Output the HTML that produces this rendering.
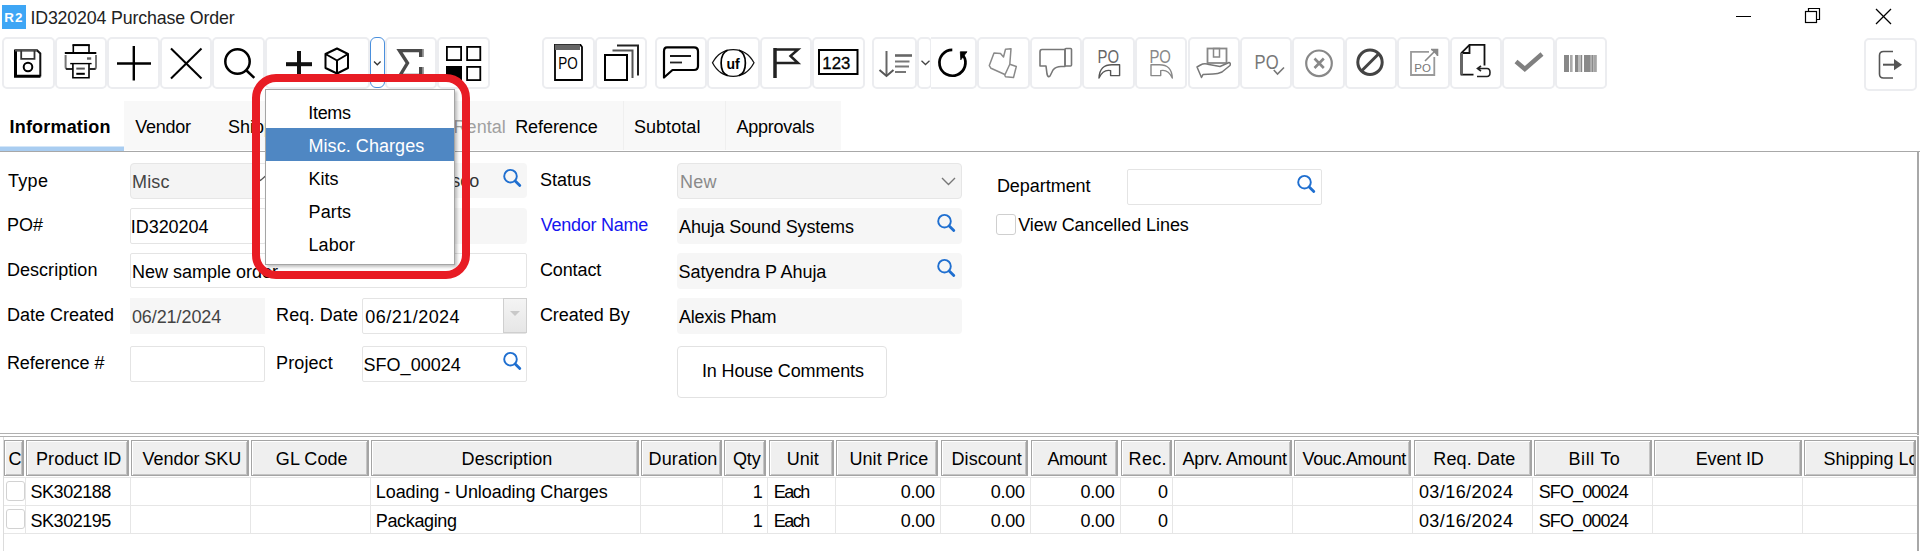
<!DOCTYPE html>
<html><head><meta charset="utf-8"><style>
html,body{margin:0;padding:0;background:#fff;width:1920px;height:551px;overflow:hidden;position:relative;font-family:"Liberation Sans",sans-serif;}
.a{position:absolute;box-sizing:border-box;}
.t{position:absolute;line-height:1;white-space:nowrap;}
svg.a{overflow:visible;}
</style></head><body>

<div class="a" style="left:2px;top:5px;width:24px;height:24px;background:#3ea6f5;"></div>
<div class="t" style="left:2px;top:11px;width:24px;text-align:center;font-size:13.4px;font-weight:700;color:#fff;letter-spacing:1.1px;">R2</div>
<div class="t" style="left:30.40px;top:9.73px;font-size:17.8px;color:#222;font-weight:400;letter-spacing:-0.148px;">ID320204 Purchase Order</div>
<svg class="a" style="left:1730px;top:5px" width="190" height="25" viewBox="0 0 190 25"><line x1="6" y1="11.5" x2="21" y2="11.5" stroke="#000" stroke-width="1"/><rect x="75.5" y="6.5" width="11" height="11" fill="none" stroke="#000" stroke-width="1.2"/><path d="M78.5 6.5 V3.5 H89.5 V14.5 H86.5" fill="none" stroke="#000" stroke-width="1.2"/><line x1="146" y1="4" x2="161" y2="19" stroke="#000" stroke-width="1.2"/><line x1="161" y1="4" x2="146" y2="19" stroke="#000" stroke-width="1.2"/></svg>
<div class="a" style="left:2px;top:37px;width:53px;height:52px;border:2px solid #ecedf0;border-radius:5px;background:#fff;"></div>
<div class="a" style="left:55px;top:37px;width:52px;height:52px;border:2px solid #ecedf0;border-radius:5px;background:#fff;"></div>
<div class="a" style="left:107px;top:37px;width:53px;height:52px;border:2px solid #ecedf0;border-radius:5px;background:#fff;"></div>
<div class="a" style="left:160px;top:37px;width:52px;height:52px;border:2px solid #ecedf0;border-radius:5px;background:#fff;"></div>
<div class="a" style="left:212px;top:37px;width:53px;height:52px;border:2px solid #ecedf0;border-radius:5px;background:#fff;"></div>
<div class="a" style="left:265px;top:37px;width:105px;height:52px;border:2px solid #ecedf0;border-radius:5px;background:#fff;"></div>
<div class="a" style="left:385px;top:37px;width:52px;height:52px;border:2px solid #ecedf0;border-radius:5px;background:#fff;"></div>
<div class="a" style="left:437px;top:37px;width:53px;height:52px;border:2px solid #ecedf0;border-radius:5px;background:#fff;"></div>
<div class="a" style="left:542px;top:37px;width:53px;height:52px;border:2px solid #ecedf0;border-radius:5px;background:#fff;"></div>
<div class="a" style="left:595px;top:37px;width:52px;height:52px;border:2px solid #ecedf0;border-radius:5px;background:#fff;"></div>
<div class="a" style="left:655px;top:37px;width:52px;height:52px;border:2px solid #ecedf0;border-radius:5px;background:#fff;"></div>
<div class="a" style="left:707px;top:37px;width:53px;height:52px;border:2px solid #ecedf0;border-radius:5px;background:#fff;"></div>
<div class="a" style="left:760px;top:37px;width:52px;height:52px;border:2px solid #ecedf0;border-radius:5px;background:#fff;"></div>
<div class="a" style="left:812px;top:37px;width:53px;height:52px;border:2px solid #ecedf0;border-radius:5px;background:#fff;"></div>
<div class="a" style="left:872px;top:37px;width:45px;height:52px;border:2px solid #ecedf0;border-radius:5px;background:#fff;"></div>
<div class="a" style="left:1030px;top:37px;width:52px;height:52px;border:2px solid #ecedf0;border-radius:5px;background:#fff;"></div>
<div class="a" style="left:977px;top:37px;width:53px;height:52px;border:2px solid #ecedf0;border-radius:5px;background:#fff;"></div>
<div class="a" style="left:1082px;top:37px;width:53px;height:52px;border:2px solid #ecedf0;border-radius:5px;background:#fff;"></div>
<div class="a" style="left:1135px;top:37px;width:52px;height:52px;border:2px solid #ecedf0;border-radius:5px;background:#fff;"></div>
<div class="a" style="left:1188px;top:37px;width:52px;height:52px;border:2px solid #ecedf0;border-radius:5px;background:#fff;"></div>
<div class="a" style="left:1240px;top:37px;width:52px;height:52px;border:2px solid #ecedf0;border-radius:5px;background:#fff;"></div>
<div class="a" style="left:1292px;top:37px;width:53px;height:52px;border:2px solid #ecedf0;border-radius:5px;background:#fff;"></div>
<div class="a" style="left:1345px;top:37px;width:52px;height:52px;border:2px solid #ecedf0;border-radius:5px;background:#fff;"></div>
<div class="a" style="left:1397px;top:37px;width:53px;height:52px;border:2px solid #ecedf0;border-radius:5px;background:#fff;"></div>
<div class="a" style="left:1450px;top:37px;width:52px;height:52px;border:2px solid #ecedf0;border-radius:5px;background:#fff;"></div>
<div class="a" style="left:1502px;top:37px;width:53px;height:52px;border:2px solid #ecedf0;border-radius:5px;background:#fff;"></div>
<div class="a" style="left:1555px;top:37px;width:52px;height:52px;border:2px solid #ecedf0;border-radius:5px;background:#fff;"></div>
<div class="a" style="left:917px;top:37px;width:15px;height:52px;border:2px solid #ecedf0;border-radius:5px;background:#fff;"></div>
<div class="a" style="left:931px;top:37px;width:46px;height:52px;border:2px solid #ecedf0;border-left:none;border-radius:0 5px 5px 0;background:#fff;"></div>
<div class="a" style="left:1864px;top:38px;width:53px;height:53px;border:2px solid #ecedf0;border-radius:5px;background:#fff;"></div>
<div class="a" style="left:370px;top:37px;width:15px;height:51px;border:1.5px solid #4a8fdc;border-radius:6px;background:#fff;"></div>
<svg class="a" style="left:0px;top:0px" width="1" height="1" viewBox="0 0 1 1"></svg>
<svg class="a" style="left:0;top:0" width="1920" height="551" viewBox="0 0 1920 551"><path d="M15.5 50.2 H37 L40.3 53.5 V76.5" fill="none" stroke="#111" stroke-width="2"/><path d="M15.5 49.5 V76.3 H40.5" fill="none" stroke="#000" stroke-width="3"/><path d="M15 50.3 H37" fill="none" stroke="#555" stroke-width="2.4"/><path d="M21.2 50.5 V58.8 H34.5 V50.5" fill="none" stroke="#333" stroke-width="1.8"/><circle cx="28" cy="67" r="4.3" fill="none" stroke="#000" stroke-width="2"/><path d="M73.3 52.5 V45 H89 V52.5" fill="none" stroke="#000" stroke-width="1.6"/><path d="M72.6 45.2 H89.6" stroke="#000" stroke-width="1.8"/><path d="M65.6 55 V67 Q65.6 69 67.6 69 H72.5 M89.7 69 H94 Q96 69 96 67 V55" fill="none" stroke="#777" stroke-width="2"/><path d="M66 69 H72.5 M89.7 69 H95.5" stroke="#111" stroke-width="1.4"/><path d="M64.8 53 H96.3" stroke="#000" stroke-width="1.8"/><path d="M70.2 63.6 H91.6" stroke="#000" stroke-width="1.4"/><path d="M72.9 63.8 V77.8 H89 V63.8" fill="none" stroke="#000" stroke-width="1.6"/><rect x="76.3" y="67.6" width="8.5" height="2" fill="#555"/><rect x="76.3" y="72.8" width="8.5" height="2" fill="#000"/><rect x="87" y="57.3" width="4.2" height="2.4" fill="#666"/><line x1="133.8" y1="46" x2="133.8" y2="80.5" stroke="#000" stroke-width="2.4"/><line x1="117" y1="63.5" x2="151" y2="63.5" stroke="#000" stroke-width="2.4"/><line x1="171" y1="48.5" x2="201.5" y2="78.5" stroke="#000" stroke-width="2"/><line x1="201.5" y1="48.5" x2="171" y2="78.5" stroke="#000" stroke-width="2"/><circle cx="237.5" cy="61.5" r="12.2" fill="none" stroke="#000" stroke-width="2.5"/><line x1="246.5" y1="70.5" x2="254.3" y2="77.8" stroke="#000" stroke-width="2.5"/><line x1="299" y1="51" x2="299" y2="78" stroke="#111" stroke-width="4"/><line x1="286" y1="64.2" x2="312" y2="64.2" stroke="#111" stroke-width="4"/><path d="M337 48.5 L348 54 V68 L337 73.5 L325.5 68 V54 Z M325.5 54 L337 60.5 L348 54 M337 60.5 V73.5" fill="none" stroke="#000" stroke-width="2" stroke-linejoin="round"/><path d="M374 61.5 L377.3 64.8 L380.6 61.5" fill="none" stroke="#333" stroke-width="1.3"/><path d="M420.7 57 V50.6 H399.5 L407.5 63 L400 75.5 H420.7 V67" fill="none" stroke="#4a4a4a" stroke-width="3.4" stroke-linejoin="miter"/><path d="M423 49 V57 M423 67 V76" stroke="#777" stroke-width="1.4"/><rect x="446.9" y="46.9" width="14.2" height="13.2" fill="none" stroke="#000" stroke-width="1.8"/><rect x="467.1" y="46.9" width="13.2" height="13.2" fill="none" stroke="#000" stroke-width="1.8"/><rect x="446" y="66" width="16" height="15.5" fill="#000"/><rect x="467.1" y="66.9" width="13.2" height="13.2" fill="none" stroke="#000" stroke-width="1.8"/><path d="M555 45 H580.5 L582 47 V80 H555 Z" fill="none" stroke="#000" stroke-width="1.8"/><rect x="555" y="44.5" width="25" height="5.5" fill="#666"/><text x="558.3" y="68.6" font-family="Liberation Sans" font-size="16.5" textLength="19.5" lengthAdjust="spacingAndGlyphs" fill="#000">PO</text><rect x="605" y="55" width="22" height="25" fill="none" stroke="#000" stroke-width="2"/><path d="M612.5 50.5 H632.5 V78" fill="none" stroke="#555" stroke-width="2"/><path d="M617 45.5 H638 V75.5" fill="none" stroke="#222" stroke-width="2"/><path d="M667 47.3 H694 Q698 47.3 698 51.3 V66 Q698 70 694 70 H672.5 L664 77.5 V51.3 Q664 47.3 667 47.3 Z" fill="none" stroke="#000" stroke-width="2.2" stroke-linejoin="round"/><line x1="670" y1="56" x2="691" y2="56" stroke="#000" stroke-width="1.8"/><line x1="670" y1="62.5" x2="682" y2="62.5" stroke="#222" stroke-width="1.8"/><path d="M712.5 62.8 C718 52.5 726 49.6 733.2 49.6 C740.5 49.6 748.5 52.5 754 62.8 C748.5 73.2 740.5 76.3 733.2 76.3 C726 76.3 718 73.2 712.5 62.8 Z" fill="none" stroke="#111" stroke-width="1.3"/><path d="M727.5 50.3 C719 54 719 72 727.5 75.6 M739 50.3 C747.5 54 747.5 72 739 75.6" fill="none" stroke="#000" stroke-width="1.7"/><text x="733" y="68.5" font-family="Liberation Sans" font-size="14" font-weight="700" text-anchor="middle" fill="#000">uf</text><line x1="775" y1="48" x2="775" y2="78" stroke="#222" stroke-width="3.5"/><path d="M775 49.5 H798 L790.5 56 L798 63 H775" fill="none" stroke="#222" stroke-width="2.5" stroke-linejoin="miter"/><rect x="819" y="50" width="38.5" height="24" fill="none" stroke="#000" stroke-width="2"/><text x="822.3" y="68.6" font-family="Liberation Sans" font-size="16.5" textLength="28" lengthAdjust="spacingAndGlyphs" fill="#000" stroke="#000" stroke-width="0.3">123</text><line x1="886.5" y1="51" x2="886.5" y2="75" stroke="#666" stroke-width="2"/><path d="M879.5 70 L886.5 76 L893.5 70" fill="none" stroke="#555" stroke-width="2"/><line x1="895" y1="55.5" x2="912" y2="55.5" stroke="#666" stroke-width="2.6"/><line x1="895" y1="61.5" x2="909.5" y2="61.5" stroke="#777" stroke-width="2"/><line x1="895" y1="66.5" x2="909" y2="66.5" stroke="#777" stroke-width="2"/><line x1="895" y1="72" x2="906" y2="72" stroke="#777" stroke-width="2"/><path d="M921.5 60.8 L925.5 64.5 L929.5 60.8" fill="none" stroke="#444" stroke-width="1.3"/><path d="M952.3 49.9 A13 12.9 0 1 0 963.2 55.6" fill="none" stroke="#000" stroke-width="2.7"/><path d="M960.3 51.8 H967 L960.8 59.8 Z" fill="#000" stroke="#000" stroke-width="0.8"/><path d="M994 53 L1000.5 53.6 L1003.5 57 L1005.5 49.3 L1011 48.7 L1009.8 64.2 L1016.3 66.5 L1013.5 77.6 L1005.5 76.8 L1004.3 74.2 L991 68.3 L989.3 65.6 Z M1009.8 64.2 L1004.6 75.5" fill="none" stroke="#8a8a8a" stroke-width="1.5" stroke-linejoin="round"/><path d="M1065 49.5 H1042 Q1040 49.5 1040 52 V66 H1046 L1047 74 Q1048 78 1050 76 L1053 70 Q1056 66.5 1061 66.5 H1065 Z" fill="none" stroke="#777" stroke-width="1.6" stroke-linejoin="round"/><rect x="1065" y="48.5" width="6.5" height="17.5" rx="1" fill="none" stroke="#777" stroke-width="1.6"/><text x="1097.6" y="62.5" font-family="Liberation Sans" font-size="18.5" textLength="21.5" lengthAdjust="spacingAndGlyphs" fill="#666">PO</text><path d="M1099 78 C1099.5 68 1104 64.8 1112 64.8 H1119.6 V75.6 H1110.6 V70.6 C1106 69.6 1102 71.5 1099 78 Z" fill="none" stroke="#555" stroke-width="1.4" stroke-linejoin="round"/><text x="1149.4" y="62.5" font-family="Liberation Sans" font-size="18.5" textLength="21.5" lengthAdjust="spacingAndGlyphs" fill="#888">PO</text><path d="M1172.3 78 C1171.8 68 1167.3 64.8 1159.3 64.8 H1151 V75.6 H1160.7 V70.6 C1165.3 69.6 1169.3 71.5 1172.3 78 Z" fill="none" stroke="#888" stroke-width="1.4" stroke-linejoin="round"/><rect x="1207.5" y="48.5" width="19" height="14.5" fill="none" stroke="#888" stroke-width="1.8"/><rect x="1213.5" y="48.5" width="6" height="8.5" fill="none" stroke="#888" stroke-width="1.5"/><path d="M1197 67 L1200.5 65 Q1204 63 1209 64.5 L1220 66.5 L1229 62.5 Q1231 63 1230 65.5 L1222 72 Q1218 74 1213 74 L1203 74.5 L1201.5 77.5 Z" fill="none" stroke="#777" stroke-width="1.5" stroke-linejoin="round"/><text x="1254.6" y="68.6" font-family="Liberation Sans" font-size="20" textLength="24" lengthAdjust="spacingAndGlyphs" fill="#777">PO</text><path d="M1273.8 70 L1277.5 74 L1284 67.5" fill="none" stroke="#777" stroke-width="1.6"/><circle cx="1319" cy="63.3" r="12.8" fill="none" stroke="#888" stroke-width="2.2"/><path d="M1314.5 58.5 L1323.8 68 M1323.8 58.5 L1314.5 68" fill="none" stroke="#888" stroke-width="2.6"/><circle cx="1370" cy="62.3" r="12.2" fill="none" stroke="#444" stroke-width="3"/><line x1="1361.5" y1="71" x2="1379" y2="53.5" stroke="#444" stroke-width="3"/><path d="M1429 51.8 H1411 V75 H1434.3 V57" fill="none" stroke="#999" stroke-width="1.8"/><line x1="1425" y1="61" x2="1436" y2="50" stroke="#888" stroke-width="1.6"/><path d="M1431 49.5 H1437.5 V56" fill="#888" stroke="#888" stroke-width="1.6"/><text x="1422.6" y="71.8" font-family="Liberation Sans" font-size="11.5" text-anchor="middle" fill="#777">PO</text><path d="M1484.5 65.5 V44.8 H1469.5 L1461.5 52.8 V74.6 H1473.5" fill="none" stroke="#111" stroke-width="1.8"/><path d="M1469.5 44.8 V53 H1461.5" fill="none" stroke="#111" stroke-width="1.8"/><line x1="1461.5" y1="53" x2="1461.5" y2="74.6" stroke="#666" stroke-width="3"/><path d="M1478 68.5 H1487 Q1490 68.5 1490 72.5 Q1490 76.5 1487 76.5 H1477" fill="none" stroke="#222" stroke-width="1.6"/><path d="M1481 66 L1477.5 68.5 L1481 71" fill="none" stroke="#222" stroke-width="1.6"/><path d="M1516 61.5 L1524.8 69 L1542 54" fill="none" stroke="#808080" stroke-width="4.5" stroke-linejoin="miter"/><rect x="1564" y="55" width="5" height="17" fill="#888"/><rect x="1570" y="55" width="2.6" height="17" fill="#aaa"/><rect x="1575" y="55" width="3" height="17" fill="#888"/><rect x="1578" y="55" width="3" height="17" fill="#bbb"/><rect x="1581" y="55" width="1.2" height="17" fill="#888"/><rect x="1584" y="55" width="6" height="17" fill="#8a8a8a"/><rect x="1590" y="55" width="1.5" height="17" fill="#aaa"/><rect x="1591.5" y="55" width="2" height="17" fill="#8a8a8a"/><rect x="1593.5" y="55" width="3.3" height="17" fill="#a5a5a5"/><path d="M1893 51.5 H1883.5 Q1879.5 51.5 1879.5 55.5 V74 Q1879.5 78 1883.5 78 H1893" fill="none" stroke="#555" stroke-width="1.6"/><line x1="1883" y1="64.7" x2="1896" y2="64.7" stroke="#555" stroke-width="2"/><path d="M1894 59 L1902 64.7 L1894 70.3 Z" fill="#555"/></svg>
<div class="a" style="left:124px;top:101px;width:717px;height:49px;background:#f8f8f8;"></div>
<div class="a" style="left:623px;top:101px;width:1px;height:49px;background:#efefef;"></div>
<div class="a" style="left:725px;top:101px;width:1px;height:49px;background:#efefef;"></div>
<div class="a" style="left:0px;top:146px;width:124px;height:5px;background:linear-gradient(#d4e6f8 0,#d4e6f8 20%,#a9cdf1 20%);"></div>
<div class="a" style="left:0px;top:151px;width:1920px;height:1px;background:#a8a8a8;"></div>
<div class="a" style="left:1917px;top:151px;width:2px;height:284px;background:#a8a8a8;"></div>
<div class="a" style="left:0px;top:433px;width:1919px;height:1px;background:#b0b0b0;"></div>
<div class="t" style="left:9.60px;top:118.16px;font-size:18px;color:#000;font-weight:700;letter-spacing:0.18px;">Information</div>
<div class="t" style="left:135.30px;top:118.16px;font-size:18px;color:#000;font-weight:400;letter-spacing:-0.291px;">Vendor</div>
<div class="t" style="left:227.90px;top:118.16px;font-size:18px;color:#000;font-weight:400;">Shipping</div>
<div class="t" style="left:453.60px;top:117.86px;font-size:18px;color:#a0a0a0;font-weight:400;letter-spacing:0.014px;">Rental</div>
<div class="t" style="left:515.20px;top:117.86px;font-size:18px;color:#000;font-weight:400;letter-spacing:-0.067px;">Reference</div>
<div class="t" style="left:633.90px;top:117.86px;font-size:18px;color:#000;font-weight:400;letter-spacing:0.064px;">Subtotal</div>
<div class="t" style="left:736.40px;top:117.86px;font-size:18px;color:#000;font-weight:400;letter-spacing:-0.23px;">Approvals</div>
<div class="t" style="left:8.10px;top:171.66px;font-size:18px;color:#000;font-weight:400;letter-spacing:0.262px;">Type</div>
<div class="t" style="left:7.10px;top:216.06px;font-size:18px;color:#000;font-weight:400;">PO#</div>
<div class="t" style="left:6.90px;top:261.46px;font-size:18px;color:#000;font-weight:400;letter-spacing:0.048px;">Description</div>
<div class="t" style="left:6.90px;top:305.86px;font-size:18px;color:#000;font-weight:400;">Date Created</div>
<div class="t" style="left:6.90px;top:353.96px;font-size:18px;color:#000;font-weight:400;letter-spacing:-0.045px;">Reference #</div>
<div class="a" style="left:130px;top:163px;width:138px;height:36px;background:#f4f4f4;border:1px solid #e6e6e6;border-radius:4px;"></div>
<div class="t" style="left:132.10px;top:173.16px;font-size:18px;color:#444;font-weight:400;letter-spacing:0.136px;">Misc</div>
<div class="a" style="left:275px;top:163px;width:252px;height:35px;background:#f6f6f6;border-radius:4px;"></div>
<div class="a" style="left:258px;top:164px;width:8px;height:34px;background:#fff;"></div>
<svg class="a" style="left:255px;top:172px" width="12" height="14"><path d="M0.5 4 L5.5 8.5 L10.5 4" fill="none" stroke="#555" stroke-width="1.3"/></svg>
<div class="t" style="left:364.26px;top:172.16px;font-size:18px;color:#333;font-weight:400;">San Francisco</div>
<div class="a" style="left:130px;top:208px;width:136px;height:36px;background:#fff;border:1.5px solid #e4e4e4;border-radius:2px;"></div>
<div class="t" style="left:130.80px;top:217.56px;font-size:18px;color:#000;font-weight:400;letter-spacing:-0.051px;">ID320204</div>
<div class="a" style="left:272px;top:208px;width:255px;height:36px;background:#f6f6f6;border-radius:4px;"></div>
<div class="a" style="left:130px;top:253px;width:397px;height:35px;background:#fff;border:1.5px solid #e4e4e4;border-radius:2px;"></div>
<div class="t" style="left:131.90px;top:263.16px;font-size:18px;color:#000;font-weight:400;">New sample order</div>
<div class="a" style="left:130px;top:298px;width:135px;height:36px;background:#f6f6f6;"></div>
<div class="t" style="left:131.90px;top:307.96px;font-size:18px;color:#444;font-weight:400;letter-spacing:-0.075px;">06/21/2024</div>
<div class="a" style="left:130px;top:346px;width:135px;height:36px;background:#fff;border:1.5px solid #e4e4e4;border-radius:2px;"></div>
<div class="t" style="left:276.10px;top:305.86px;font-size:18px;color:#000;font-weight:400;letter-spacing:0.121px;">Req. Date</div>
<div class="a" style="left:362px;top:298px;width:165px;height:36px;background:#fff;border:1.5px solid #e4e4e4;border-radius:2px;"></div>
<div class="a" style="left:503px;top:298px;width:24px;height:35px;background:linear-gradient(#f4f4f4,#e6e6e6);border:1px solid #cfcfcf;"></div>
<svg class="a" style="left:503px;top:298px" width="24" height="35"><path d="M7 13 L12 18 L17 13 Z" fill="#c8c8c8"/></svg>
<div class="t" style="left:365.30px;top:308.06px;font-size:18px;color:#000;font-weight:400;letter-spacing:0.469px;">06/21/2024</div>
<div class="t" style="left:276.10px;top:353.56px;font-size:18px;color:#000;font-weight:400;letter-spacing:0.097px;">Project</div>
<div class="a" style="left:362px;top:346px;width:165px;height:36px;background:#fff;border:1.5px solid #e4e4e4;border-radius:2px;"></div>
<div class="t" style="left:363.60px;top:356.26px;font-size:18px;color:#000;font-weight:400;letter-spacing:0.006px;">SFO_00024</div>
<svg class="a" style="left:501.5px;top:169px" width="20" height="19" viewBox="0 0 20 19"><circle cx="8.5" cy="7.2" r="6.3" fill="none" stroke="#1f6fd0" stroke-width="1.9"/><line x1="13.2" y1="11.9" x2="17.8" y2="16.6" stroke="#1f6fd0" stroke-width="2.8" stroke-linecap="round"/></svg>
<svg class="a" style="left:501.5px;top:351.5px" width="20" height="19" viewBox="0 0 20 19"><circle cx="8.5" cy="7.2" r="6.3" fill="none" stroke="#1f6fd0" stroke-width="1.9"/><line x1="13.2" y1="11.9" x2="17.8" y2="16.6" stroke="#1f6fd0" stroke-width="2.8" stroke-linecap="round"/></svg>
<div class="t" style="left:540.00px;top:171.06px;font-size:18px;color:#000;font-weight:400;letter-spacing:0.014px;">Status</div>
<div class="t" style="left:540.80px;top:216.16px;font-size:18px;color:#1515f0;font-weight:400;letter-spacing:-0.255px;">Vendor Name</div>
<div class="t" style="left:539.90px;top:261.26px;font-size:18px;color:#000;font-weight:400;letter-spacing:-0.105px;">Contact</div>
<div class="t" style="left:539.90px;top:306.26px;font-size:18px;color:#000;font-weight:400;letter-spacing:-0.027px;">Created By</div>
<div class="a" style="left:677px;top:163px;width:285px;height:36px;background:#f4f4f4;border:1px solid #e6e6e6;border-radius:4px;"></div>
<div class="t" style="left:679.90px;top:173.06px;font-size:18px;color:#8a8a8a;font-weight:400;letter-spacing:0.295px;">New</div>
<svg class="a" style="left:940px;top:175px" width="18" height="12"><path d="M2 3 L8.5 9.5 L15 3" fill="none" stroke="#777" stroke-width="1.4"/></svg>
<div class="a" style="left:677px;top:208px;width:285px;height:36px;background:#f6f6f6;border-radius:4px;"></div>
<div class="t" style="left:679.10px;top:217.76px;font-size:18px;color:#000;font-weight:400;letter-spacing:-0.128px;">Ahuja Sound Systems</div>
<svg class="a" style="left:936px;top:214px" width="20" height="19" viewBox="0 0 20 19"><circle cx="8.5" cy="7.2" r="6.3" fill="none" stroke="#1f6fd0" stroke-width="1.9"/><line x1="13.2" y1="11.9" x2="17.8" y2="16.6" stroke="#1f6fd0" stroke-width="2.8" stroke-linecap="round"/></svg>
<div class="a" style="left:677px;top:253px;width:285px;height:36px;background:#f6f6f6;border-radius:4px;"></div>
<div class="t" style="left:678.50px;top:262.66px;font-size:18px;color:#000;font-weight:400;letter-spacing:-0.056px;">Satyendra P Ahuja</div>
<svg class="a" style="left:936px;top:259px" width="20" height="19" viewBox="0 0 20 19"><circle cx="8.5" cy="7.2" r="6.3" fill="none" stroke="#1f6fd0" stroke-width="1.9"/><line x1="13.2" y1="11.9" x2="17.8" y2="16.6" stroke="#1f6fd0" stroke-width="2.8" stroke-linecap="round"/></svg>
<div class="a" style="left:677px;top:298px;width:285px;height:36px;background:#f6f6f6;border-radius:4px;"></div>
<div class="t" style="left:679.10px;top:307.66px;font-size:18px;color:#000;font-weight:400;letter-spacing:-0.274px;">Alexis Pham</div>
<div class="a" style="left:677px;top:346px;width:210px;height:52px;background:#fff;border:1.5px solid #e2e2e2;border-radius:4px;"></div>
<div class="t" style="left:701.90px;top:362.16px;font-size:18px;color:#000;font-weight:400;letter-spacing:-0.123px;">In House Comments</div>
<div class="t" style="left:996.90px;top:176.86px;font-size:18px;color:#000;font-weight:400;letter-spacing:-0.038px;">Department</div>
<div class="a" style="left:1127px;top:169px;width:195px;height:36px;background:#fff;border:1.5px solid #e4e4e4;border-radius:2px;"></div>
<svg class="a" style="left:1296px;top:175px" width="20" height="19" viewBox="0 0 20 19"><circle cx="8.5" cy="7.2" r="6.3" fill="none" stroke="#1f6fd0" stroke-width="1.9"/><line x1="13.2" y1="11.9" x2="17.8" y2="16.6" stroke="#1f6fd0" stroke-width="2.8" stroke-linecap="round"/></svg>
<div class="a" style="left:996px;top:214px;width:20px;height:21px;background:#fff;border:1.5px solid #cfcfcf;border-radius:3px;"></div>
<div class="t" style="left:1018.25px;top:215.76px;font-size:18px;color:#000;font-weight:400;letter-spacing:-0.062px;">View Cancelled Lines</div>
<div class="a" style="left:0px;top:436px;width:1919px;height:1px;background:#b0b0b0;"></div>
<div class="a" style="left:3px;top:437px;width:1px;height:114px;background:#dcdcdc;"></div>
<div class="a" style="left:1917px;top:437px;width:2px;height:114px;background:#a8a8a8;"></div>
<div class="a" style="left:4px;top:440px;width:20px;height:36px;background:#efefef;border:1px solid #a4a4a4;border-right:2px solid #a4a4a4;box-shadow:inset 1px 1px 0 #fff, inset -1px -1px 0 #c4c4c4;"></div>
<div class="t" style="left:8.60px;top:450.26px;font-size:18px;color:#000;font-weight:400;">C</div>
<div class="a" style="left:26px;top:440px;width:103px;height:36px;background:#efefef;border:1px solid #a4a4a4;border-right:2px solid #a4a4a4;box-shadow:inset 1px 1px 0 #fff, inset -1px -1px 0 #c4c4c4;"></div>
<div class="t" style="left:36.10px;top:450.26px;font-size:18px;color:#000;font-weight:400;letter-spacing:0.018px;">Product ID</div>
<div class="a" style="left:131px;top:440px;width:118px;height:36px;background:#efefef;border:1px solid #a4a4a4;border-right:2px solid #a4a4a4;box-shadow:inset 1px 1px 0 #fff, inset -1px -1px 0 #c4c4c4;"></div>
<div class="t" style="left:142.50px;top:450.26px;font-size:18px;color:#000;font-weight:400;letter-spacing:-0.029px;">Vendor SKU</div>
<div class="a" style="left:251px;top:440px;width:118px;height:36px;background:#efefef;border:1px solid #a4a4a4;border-right:2px solid #a4a4a4;box-shadow:inset 1px 1px 0 #fff, inset -1px -1px 0 #c4c4c4;"></div>
<div class="t" style="left:275.85px;top:450.26px;font-size:18px;color:#000;font-weight:400;letter-spacing:0.053px;">GL Code</div>
<div class="a" style="left:371px;top:440px;width:268px;height:36px;background:#efefef;border:1px solid #a4a4a4;border-right:2px solid #a4a4a4;box-shadow:inset 1px 1px 0 #fff, inset -1px -1px 0 #c4c4c4;"></div>
<div class="t" style="left:461.60px;top:450.26px;font-size:18px;color:#000;font-weight:400;letter-spacing:0.073px;">Description</div>
<div class="a" style="left:641px;top:440px;width:81px;height:36px;background:#efefef;border:1px solid #a4a4a4;border-right:2px solid #a4a4a4;box-shadow:inset 1px 1px 0 #fff, inset -1px -1px 0 #c4c4c4;"></div>
<div class="t" style="left:648.60px;top:450.26px;font-size:18px;color:#000;font-weight:400;letter-spacing:0.104px;">Duration</div>
<div class="a" style="left:724px;top:440px;width:42px;height:36px;background:#efefef;border:1px solid #a4a4a4;border-right:2px solid #a4a4a4;box-shadow:inset 1px 1px 0 #fff, inset -1px -1px 0 #c4c4c4;"></div>
<div class="t" style="left:732.95px;top:450.26px;font-size:18px;color:#000;font-weight:400;letter-spacing:-0.101px;">Qty</div>
<div class="a" style="left:769px;top:440px;width:65px;height:36px;background:#efefef;border:1px solid #a4a4a4;border-right:2px solid #a4a4a4;box-shadow:inset 1px 1px 0 #fff, inset -1px -1px 0 #c4c4c4;"></div>
<div class="t" style="left:786.70px;top:450.26px;font-size:18px;color:#000;font-weight:400;letter-spacing:0.047px;">Unit</div>
<div class="a" style="left:836px;top:440px;width:102px;height:36px;background:#efefef;border:1px solid #a4a4a4;border-right:2px solid #a4a4a4;box-shadow:inset 1px 1px 0 #fff, inset -1px -1px 0 #c4c4c4;"></div>
<div class="t" style="left:849.45px;top:450.26px;font-size:18px;color:#000;font-weight:400;letter-spacing:0.082px;">Unit Price</div>
<div class="a" style="left:941px;top:440px;width:87px;height:36px;background:#efefef;border:1px solid #a4a4a4;border-right:2px solid #a4a4a4;box-shadow:inset 1px 1px 0 #fff, inset -1px -1px 0 #c4c4c4;"></div>
<div class="t" style="left:951.60px;top:450.26px;font-size:18px;color:#000;font-weight:400;letter-spacing:0.031px;">Discount</div>
<div class="a" style="left:1031px;top:440px;width:87px;height:36px;background:#efefef;border:1px solid #a4a4a4;border-right:2px solid #a4a4a4;box-shadow:inset 1px 1px 0 #fff, inset -1px -1px 0 #c4c4c4;"></div>
<div class="t" style="left:1047.50px;top:450.26px;font-size:18px;color:#000;font-weight:400;letter-spacing:-0.486px;">Amount</div>
<div class="a" style="left:1121px;top:440px;width:51px;height:36px;background:#efefef;border:1px solid #a4a4a4;border-right:2px solid #a4a4a4;box-shadow:inset 1px 1px 0 #fff, inset -1px -1px 0 #c4c4c4;"></div>
<div class="t" style="left:1128.60px;top:450.26px;font-size:18px;color:#000;font-weight:400;letter-spacing:0.33px;">Rec.</div>
<div class="a" style="left:1174px;top:440px;width:118px;height:36px;background:#efefef;border:1px solid #a4a4a4;border-right:2px solid #a4a4a4;box-shadow:inset 1px 1px 0 #fff, inset -1px -1px 0 #c4c4c4;"></div>
<div class="t" style="left:1182.50px;top:450.26px;font-size:18px;color:#000;font-weight:400;letter-spacing:-0.192px;">Aprv. Amount</div>
<div class="a" style="left:1294px;top:440px;width:117px;height:36px;background:#efefef;border:1px solid #a4a4a4;border-right:2px solid #a4a4a4;box-shadow:inset 1px 1px 0 #fff, inset -1px -1px 0 #c4c4c4;"></div>
<div class="t" style="left:1302.50px;top:450.26px;font-size:18px;color:#000;font-weight:400;letter-spacing:-0.322px;">Vouc.Amount</div>
<div class="a" style="left:1414px;top:440px;width:118px;height:36px;background:#efefef;border:1px solid #a4a4a4;border-right:2px solid #a4a4a4;box-shadow:inset 1px 1px 0 #fff, inset -1px -1px 0 #c4c4c4;"></div>
<div class="t" style="left:1433.30px;top:450.26px;font-size:18px;color:#000;font-weight:400;letter-spacing:0.121px;">Req. Date</div>
<div class="a" style="left:1534px;top:440px;width:118px;height:36px;background:#efefef;border:1px solid #a4a4a4;border-right:2px solid #a4a4a4;box-shadow:inset 1px 1px 0 #fff, inset -1px -1px 0 #c4c4c4;"></div>
<div class="t" style="left:1568.40px;top:450.26px;font-size:18px;color:#000;font-weight:400;letter-spacing:0.616px;">Bill To</div>
<div class="a" style="left:1654px;top:440px;width:148px;height:36px;background:#efefef;border:1px solid #a4a4a4;border-right:2px solid #a4a4a4;box-shadow:inset 1px 1px 0 #fff, inset -1px -1px 0 #c4c4c4;"></div>
<div class="t" style="left:1695.70px;top:450.26px;font-size:18px;color:#000;font-weight:400;letter-spacing:-0.133px;">Event ID</div>
<div class="a" style="left:1804px;top:440px;width:112px;height:36px;background:#efefef;border:1px solid #a4a4a4;border-right:2px solid #a4a4a4;box-shadow:inset 1px 1px 0 #fff, inset -1px -1px 0 #c4c4c4;"></div>
<div class="a" style="left:1805px;top:441px;width:109px;height:34px;overflow:hidden;"><div class="t" style="left:18.40000000000009px;top:9.26px;font-size:18px;">Shipping Location</div></div>
<div class="a" style="left:4px;top:477px;width:1913px;height:1px;background:#e6e6e6;"></div>
<div class="a" style="left:4px;top:505px;width:1913px;height:1px;background:#e6e6e6;"></div>
<div class="a" style="left:4px;top:533px;width:1913px;height:1px;background:#e6e6e6;"></div>
<div class="a" style="left:25px;top:477px;width:1px;height:57px;background:#e6e6e6;"></div>
<div class="a" style="left:130px;top:477px;width:1px;height:57px;background:#e6e6e6;"></div>
<div class="a" style="left:250px;top:477px;width:1px;height:57px;background:#e6e6e6;"></div>
<div class="a" style="left:370px;top:477px;width:1px;height:57px;background:#e6e6e6;"></div>
<div class="a" style="left:640px;top:477px;width:1px;height:57px;background:#e6e6e6;"></div>
<div class="a" style="left:722px;top:477px;width:1px;height:57px;background:#e6e6e6;"></div>
<div class="a" style="left:767px;top:477px;width:1px;height:57px;background:#e6e6e6;"></div>
<div class="a" style="left:835px;top:477px;width:1px;height:57px;background:#e6e6e6;"></div>
<div class="a" style="left:940px;top:477px;width:1px;height:57px;background:#e6e6e6;"></div>
<div class="a" style="left:1030px;top:477px;width:1px;height:57px;background:#e6e6e6;"></div>
<div class="a" style="left:1120px;top:477px;width:1px;height:57px;background:#e6e6e6;"></div>
<div class="a" style="left:1172px;top:477px;width:1px;height:57px;background:#e6e6e6;"></div>
<div class="a" style="left:1292px;top:477px;width:1px;height:57px;background:#e6e6e6;"></div>
<div class="a" style="left:1412px;top:477px;width:1px;height:57px;background:#e6e6e6;"></div>
<div class="a" style="left:1532px;top:477px;width:1px;height:57px;background:#e6e6e6;"></div>
<div class="a" style="left:1652px;top:477px;width:1px;height:57px;background:#e6e6e6;"></div>
<div class="a" style="left:1802px;top:477px;width:1px;height:57px;background:#e6e6e6;"></div>
<div class="a" style="left:6px;top:481px;width:19px;height:20px;background:#fff;border:1px solid #d2d2d2;border-radius:3px;"></div>
<div class="t" style="left:30.60px;top:483.26px;font-size:18px;color:#000;font-weight:400;letter-spacing:-0.495px;">SK302188</div>
<div class="t" style="left:375.80px;top:483.26px;font-size:18px;color:#000;font-weight:400;letter-spacing:-0.083px;">Loading - Unloading Charges</div>
<div class="t" style="left:752.70px;top:483.26px;font-size:18px;color:#000;font-weight:400;">1</div>
<div class="t" style="left:773.70px;top:483.26px;font-size:18px;color:#000;font-weight:400;letter-spacing:-1.506px;">Each</div>
<div class="t" style="left:900.70px;top:483.26px;font-size:18px;color:#000;font-weight:400;letter-spacing:-0.241px;">0.00</div>
<div class="t" style="left:990.70px;top:483.26px;font-size:18px;color:#000;font-weight:400;letter-spacing:-0.274px;">0.00</div>
<div class="t" style="left:1080.60px;top:483.26px;font-size:18px;color:#000;font-weight:400;letter-spacing:-0.307px;">0.00</div>
<div class="t" style="left:1158.10px;top:483.26px;font-size:18px;color:#000;font-weight:400;">0</div>
<div class="t" style="left:1418.90px;top:483.26px;font-size:18px;color:#000;font-weight:400;letter-spacing:0.436px;">03/16/2024</div>
<div class="t" style="left:1538.70px;top:483.26px;font-size:18px;color:#000;font-weight:400;letter-spacing:-0.882px;">SFO_00024</div>
<div class="a" style="left:6px;top:509px;width:19px;height:20px;background:#fff;border:1px solid #d2d2d2;border-radius:3px;"></div>
<div class="t" style="left:30.60px;top:511.76px;font-size:18px;color:#000;font-weight:400;letter-spacing:-0.495px;">SK302195</div>
<div class="t" style="left:375.80px;top:511.76px;font-size:18px;color:#000;font-weight:400;letter-spacing:-0.356px;">Packaging</div>
<div class="t" style="left:752.70px;top:511.76px;font-size:18px;color:#000;font-weight:400;">1</div>
<div class="t" style="left:773.70px;top:511.76px;font-size:18px;color:#000;font-weight:400;letter-spacing:-1.506px;">Each</div>
<div class="t" style="left:900.70px;top:511.76px;font-size:18px;color:#000;font-weight:400;letter-spacing:-0.241px;">0.00</div>
<div class="t" style="left:990.70px;top:511.76px;font-size:18px;color:#000;font-weight:400;letter-spacing:-0.274px;">0.00</div>
<div class="t" style="left:1080.60px;top:511.76px;font-size:18px;color:#000;font-weight:400;letter-spacing:-0.307px;">0.00</div>
<div class="t" style="left:1158.10px;top:511.76px;font-size:18px;color:#000;font-weight:400;">0</div>
<div class="t" style="left:1418.90px;top:511.76px;font-size:18px;color:#000;font-weight:400;letter-spacing:0.436px;">03/16/2024</div>
<div class="t" style="left:1538.70px;top:511.76px;font-size:18px;color:#000;font-weight:400;letter-spacing:-0.882px;">SFO_00024</div>
<div class="a" style="left:265px;top:89px;width:190px;height:176px;background:#fff;border:1px solid #a5a5a5;box-shadow:2px 2px 3px rgba(0,0,0,0.25);"></div>
<div class="a" style="left:266px;top:128px;width:188px;height:33px;background:#4f87c3;"></div>
<div class="t" style="left:308.30px;top:104.36px;font-size:18px;color:#000;font-weight:400;letter-spacing:-0.327px;">Items</div>
<div class="t" style="left:308.50px;top:137.36px;font-size:18px;color:#fff;font-weight:400;letter-spacing:0.056px;">Misc. Charges</div>
<div class="t" style="left:308.50px;top:169.76px;font-size:18px;color:#000;font-weight:400;letter-spacing:0.031px;">Kits</div>
<div class="t" style="left:308.50px;top:202.86px;font-size:18px;color:#000;font-weight:400;letter-spacing:0.122px;">Parts</div>
<div class="t" style="left:308.50px;top:235.56px;font-size:18px;color:#000;font-weight:400;letter-spacing:0.114px;">Labor</div>
<div class="a" style="left:252px;top:74px;width:218px;height:205px;border:8px solid #e81c24;border-radius:24px;"></div>
</body></html>
